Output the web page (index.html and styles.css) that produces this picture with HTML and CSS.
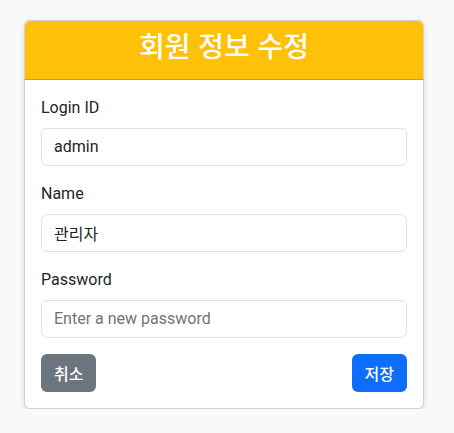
FILE: index.html
```html
<!DOCTYPE html>
<html lang="ko">
<head>
<meta charset="utf-8">
<link rel="stylesheet" href="styles.css">
</head>
<body>
<div class="page">
  <div class="card">
    <div class="card-header">
      <h3 class="title">회원 정보 수정</h3>
    </div>
    <form class="card-body">
      <div class="field">
        <label class="label" for="loginId">Login ID</label>
        <input class="input" id="loginId" type="text" value="admin">
      </div>
      <div class="field">
        <label class="label" for="name">Name</label>
        <input class="input" id="name" type="text" value="관리자">
      </div>
      <div class="field">
        <label class="label" for="pw">Password</label>
        <input class="input" id="pw" type="password" placeholder="Enter a new password">
      </div>
      <div class="actions">
        <button type="button" class="btn btn-secondary">취소</button>
        <button type="button" class="btn btn-primary">저장</button>
      </div>
    </form>
  </div>
</div>
</body>
</html>
```

FILE: styles.css
```css
* { box-sizing: border-box; }
html, body { margin: 0; }
body {
  background: #f8f9fa;
  font-family: Roboto, "Noto Sans CJK KR", sans-serif;
  font-size: 16px;
  line-height: 1.5;
  color: #212529;
}
.page {
  padding: 20px 0 0 24px;
}
.card {
  width: 400px;
  background: #fff;
  border: 1px solid rgba(0,0,0,0.175);
  border-radius: 6px;
  box-shadow: 0 2px 6px rgba(0,0,0,.12);
  overflow: hidden;
}
.card-header {
  background: #ffc107;
  padding: 8px 16px;
  border-bottom: 1px solid rgba(0,0,0,0.175);
  text-align: center;
}
.title {
  margin: 0 0 8px;
  font-size: 28px;
  line-height: 1.2;
  font-weight: 500;
  color: #fff;
  font-family: "Noto Sans CJK KR", sans-serif;
}
.card-body {
  padding: 16px;
  margin: 0;
}
.field {
  display: flex;
  flex-direction: column;
  margin-bottom: 16px;
}
.label {
  margin-bottom: 8px;
  line-height: 24px;
}
.input {
  height: 38px;
  padding: 6px 12px;
  font: inherit;
  color: #212529;
  border: 1px solid #dee2e6;
  border-radius: 6px;
  background: #fff;
  font-family: Roboto, "Noto Sans CJK KR", sans-serif;
}
.input::placeholder { color: #6c757d; opacity: 1; }
.actions {
  display: flex;
  justify-content: space-between;
}
.btn {
  height: 38px;
  padding: 6px 12px;
  border: 1px solid transparent;
  border-radius: 6px;
  font-family: "Noto Sans CJK KR", sans-serif;
  font-size: 16px;
  font-weight: 500;
  color: #fff;
  line-height: 24px;
}
.btn-secondary { background: #6c757d; }
.btn-primary { background: #0d6efd; }
```
